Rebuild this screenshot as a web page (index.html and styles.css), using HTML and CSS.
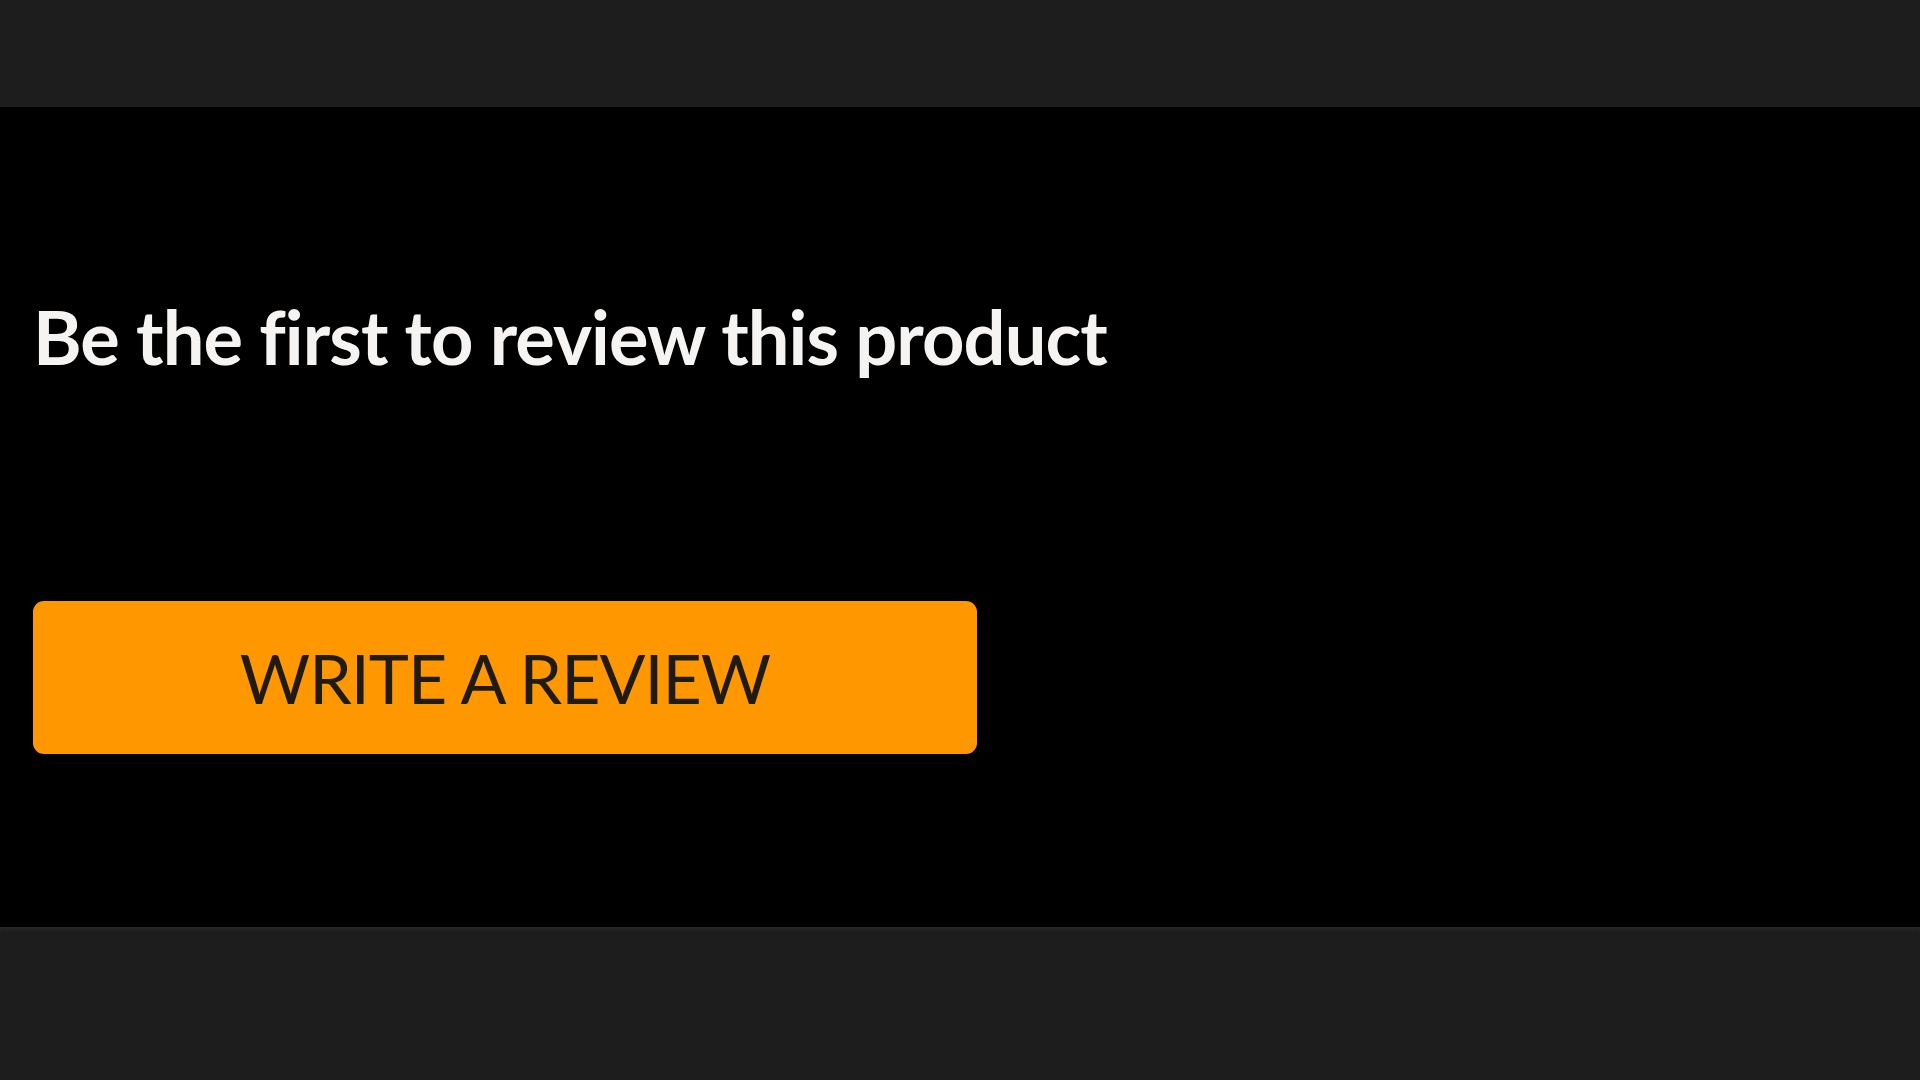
FILE: index.html
```html
<!DOCTYPE html>
<html lang="en">
<head>
  <meta charset="UTF-8">
  <meta name="viewport" content="width=device-width, initial-scale=1.0">
  <title>Reviews</title>
  <link rel="stylesheet" href="styles.css">
</head>
<body>
  <div class="topbar"></div>
  <div class="reviews">
    <h2 class="reviews-title">Be the first to review this product</h2>
    <button class="write-btn">WRITE A REVIEW</button>
  </div>
  <div class="bottombar"></div>
</body>
</html>
```

FILE: styles.css
```css
body {
  margin: 0;
  font-family: Lato, "Open Sans", sans-serif;
  background-color: #1d1d1d;
  height: 1080px;
  display: flex;
  flex-direction: column;
}
.topbar {
  height: 107px;
  background-color: #1d1d1d;
}
.reviews {
  height: 820px;
  box-sizing: border-box;
  background-color: #000;
  padding: 186px 33px 0;
  display: flex;
  flex-direction: column;
  align-items: flex-start;
}
.reviews-title {
  margin: 0;
  font-size: 74px;
  line-height: 1.2;
  font-weight: 700;
  letter-spacing: -0.9px;
  color: #f6f4f2;
}
.write-btn {
  margin-top: 219px;
  width: 944px;
  height: 153px;
  background-color: #ff9800;
  color: #1f1a12;
  border: none;
  border-radius: 11px;
  font-family: Lato, sans-serif;
  font-size: 68px;
  line-height: 1.2;
  font-weight: 400;
  letter-spacing: -1px;
  display: flex;
  align-items: center;
  justify-content: center;
  cursor: pointer;
}
.bottombar {
  flex: 1;
  background-color: #1d1d1d;
  box-shadow: inset 0 4px 4px -2px #2a2a2a;
}
```
